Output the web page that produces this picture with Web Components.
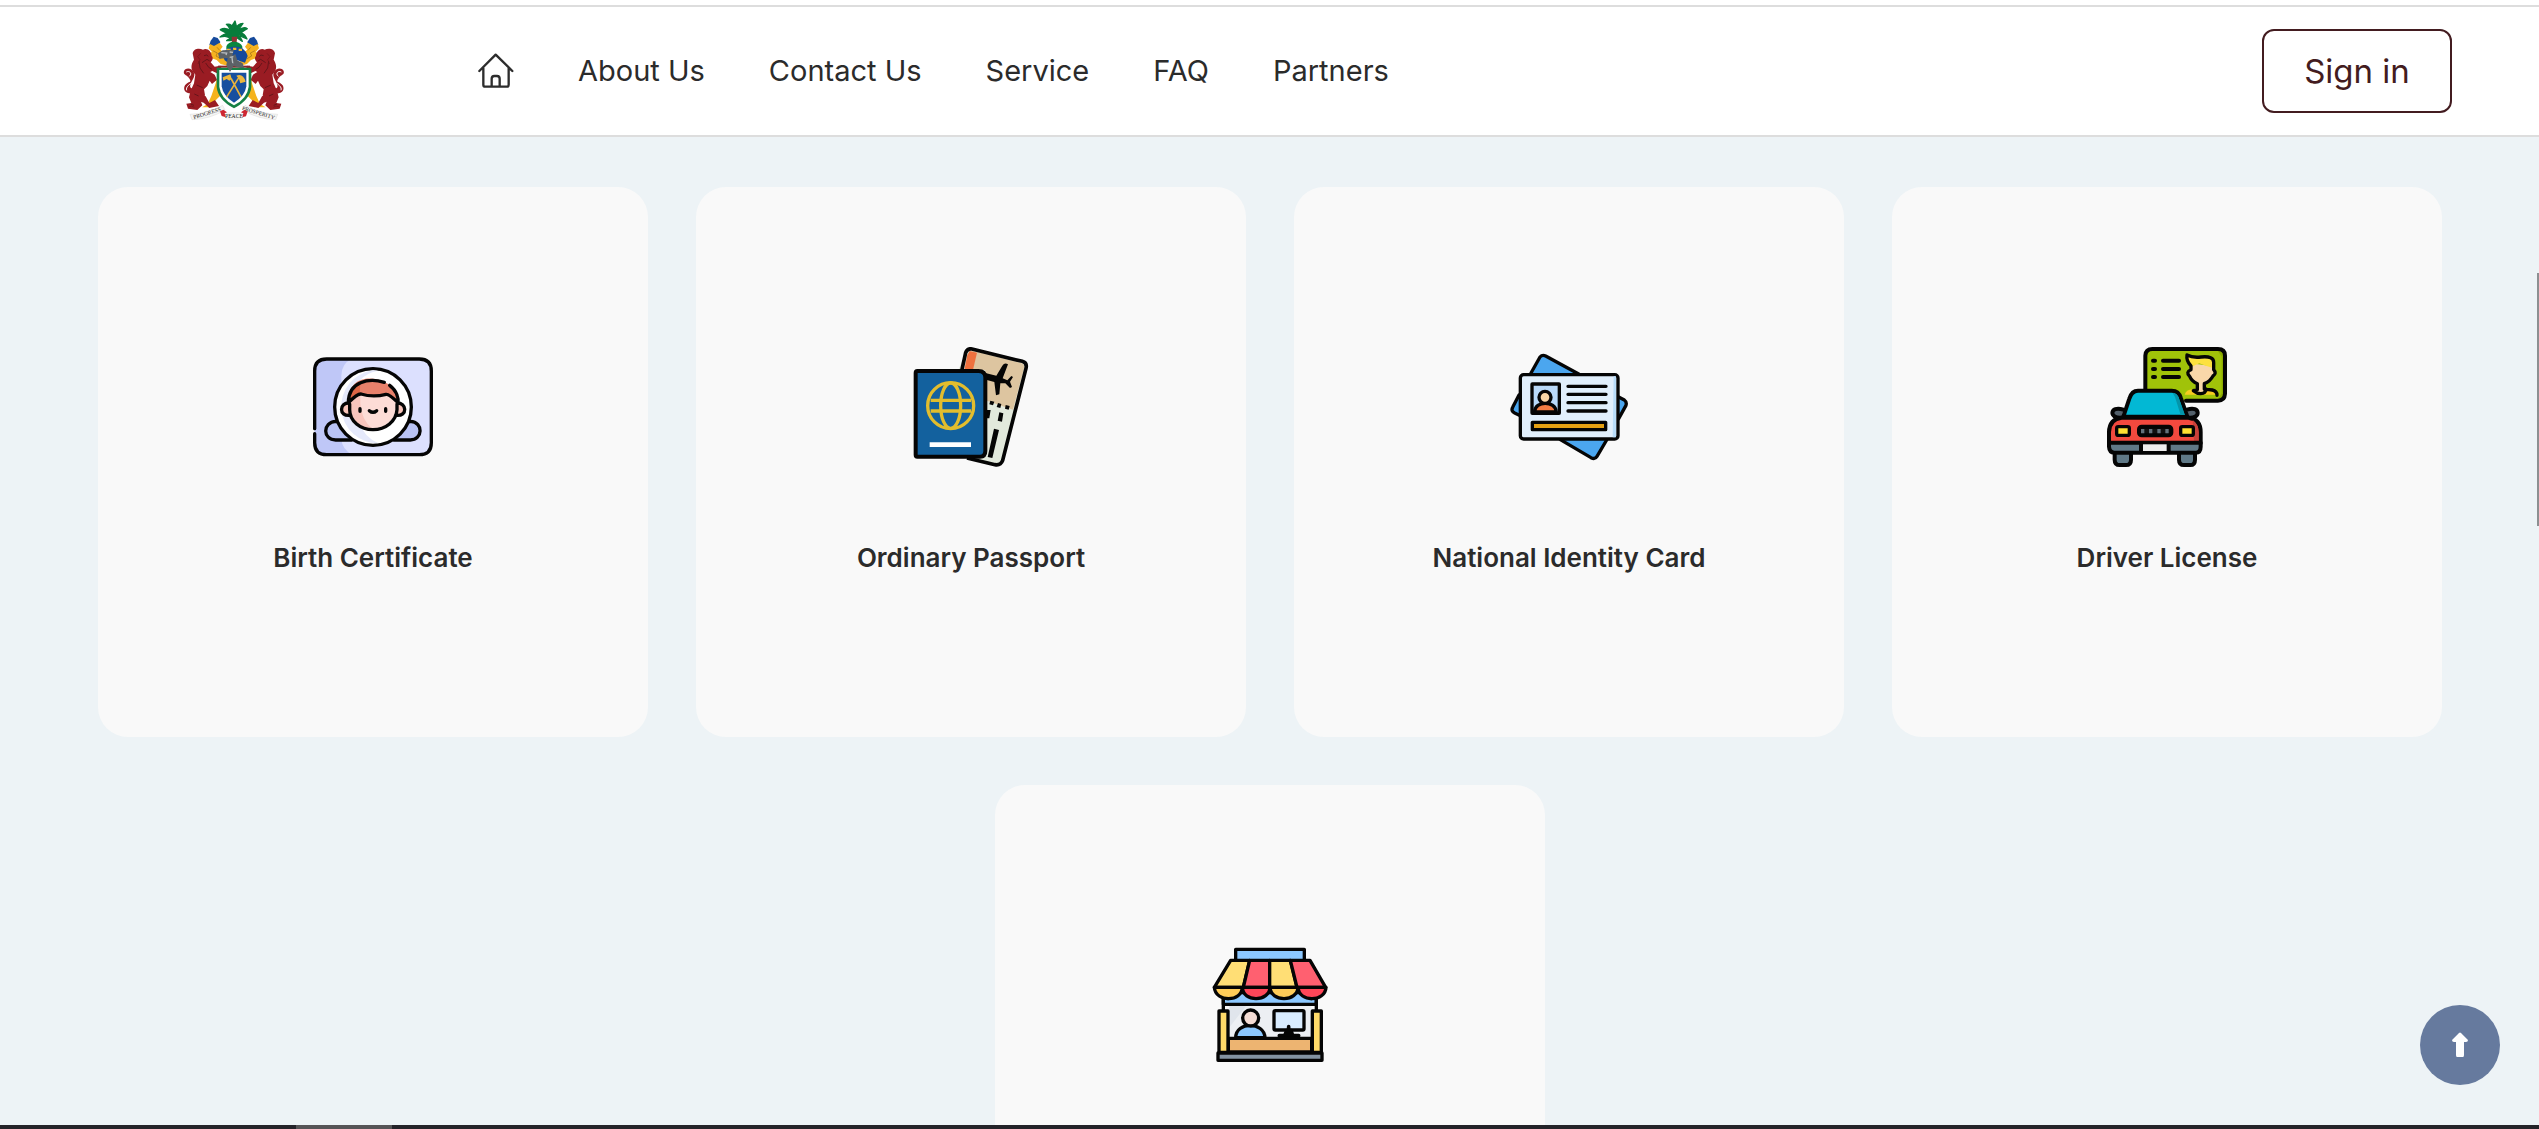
<!DOCTYPE html>
<html lang="en">
<head>
<meta charset="utf-8">
<title>Services</title>
<style>
html,body{margin:0;height:100%;overflow:hidden}
body{font-family:Inter,"Open Sans",sans-serif;color:#2b2b2b;background:#edf3f6}
</style>
</head>
<body>
<portal-page></portal-page>

<template id="art-crest">
<svg viewBox="36 27 312 312" aria-hidden="true">
<!-- lion, reused mirrored on the right -->
<defs>
<g id="side">
<path d="M124 205 L139 214 L124 258 L113 282 L96 292 L118 292 L134 274 L150 258 L143 212Z" fill="#f5b31c"/>
<path d="M122 92 L131 80 L143 84 L151 96 L146 108 L130 110 L118 105Z" fill="#164a9c"/>
<path d="M120 102 L132 108 L149 98 L158 110 L151 119 L163 128 L159 140 L174 150 L172 167 L152 162 L140 150 L122 144 L112 132 L126 126 L116 115Z" fill="#f6b220"/>
<path d="M128 122l14 7-4 9 14 8M141 112l8 9" stroke="#9a6b1a" stroke-width="2" fill="none"/>
<path d="M70 250 C48 254 37 240 45 226 C55 212 68 220 57 204 C48 192 39 196 42 183 C49 171 66 175 72 188 C77 201 64 211 61 224 C57 236 70 238 76 231Z" fill="#9a1c23"/>
<path d="M49 186 C58 181 68 190 58 199 M50 241 C47 231 57 225 62 220" stroke="#fff" stroke-width="3" fill="none"/>
<path d="M68 130 C71 114 89 114 99 119 C111 112 125 124 125 138 C132 144 126 153 122 157 L134 170 L151 167 L158 182 L141 190 L127 183 L121 186 L134 194 L141 209 L126 222 L119 212 L112 228 L102 238 L105 256 L92 272 L97 286 L82 300 L54 296 L49 281 L64 279 L57 262 L62 242 L72 220 L76 194 L68 184 C60 168 68 156 72 149Z" fill="#9a1c23"/>
<path d="M84 248 L107 259 L118 279 L135 270 L147 288 L118 294 L101 278 L83 272Z" fill="#9a1c23"/>
<path d="M102 137l8-2 5 4M96 158l15-10 8 5M87 153l3 21 11 16M107 159l9 13 10 6M80 225l18 8M73 252l13 6M62 282l10 4" stroke="#4c1015" stroke-width="2" fill="none"/>
<path d="M92 130l-9 10 7 9-6 13M55 291l10-3 8 4" stroke="#701319" stroke-width="2" fill="none"/>
</g>
</defs>
<use href="#side"/><use href="#side" transform="matrix(-1 0 0 1 383 0)"/>
<!-- crest: palm, wreath and helmet -->
<path d="M190 90 C172 76 161 79 150 81 C160 73 166 70 172 71 C160 63 155 63 151 59 C164 52 176 58 183 64 C178 54 177 49 169 43 C183 39 189 52 191 57 L187 46 L195 33 L199 48 L194 60 C202 43 211 40 219 40 C213 49 207 56 205 61 C218 51 228 53 232 56 C220 63 216 66 211 69 C222 70 226 76 231 87 C216 80 208 76 202 76 C212 81 215 87 217 94 C204 86 198 82 195 77 L193 89 C190 92 181 91 170 92 C178 87 185 82 190 78Z" fill="#087d3b" stroke="#087d3b" stroke-width="4" stroke-linejoin="round"/>
<path d="M185 80 L202 80 L199 102 L186 102Z" fill="#943235"/>
<path d="M169 110 C174 90 210 90 217 110 L217 117 L169 117Z" fill="#08863f"/>
<path d="M158 137 C169 100 223 101 233 138 L225 158 L202 151 L176 160 L164 151Z" fill="#164a9c"/>
<path d="M171 116h11v7h-11zM189 113h10v7h-10zM206 116h10v7h-10z" fill="#f6c02a"/>
<path d="M144 170h96" stroke="#8d2328" stroke-width="6"/>
<path d="M144 130 L158 121 L192 119 L187 137 L196 132 L202 151 L218 160 L223 177 L190 168 L178 183 L169 165 L173 144 L148 146Z" fill="#5c6267"/>
<path d="M154 128l16 1-2 6M179 126l10 1M186 143l3 23M179 142l11-2" stroke="#b8bdc1" stroke-width="4" fill="none"/>
<!-- shield -->
<path d="M140 173 H244 V231 Q240 270 192 295 Q144 270 140 231Z" fill="#168044"/>
<path d="M148 180 H236 V230 Q232 265 192 286 Q152 265 148 230Z" fill="#fff"/>
<path d="M155 188 H229 V229 Q225 258 192 278 Q159 258 155 229Z" fill="#174f9f"/>
<path d="M171 259 L205 205 M212 259 L184 207" stroke="#e7b23e" stroke-width="5" stroke-linecap="round"/>
<path d="M158 202 L181 193 L185 206 L178 212 L170 207 L160 212Z M199 197 Q219 188 227 215 L211 220 L207 207Z" fill="#edb83e"/>
<path d="M176 157 L198 162 L190 169 L180 186 L172 171Z" fill="#5c6267"/>
<!-- motto ribbon -->
<path d="M60 313 Q111 311 158 286 L165 300 Q119 328 66 329Z M323 313 Q272 311 225 286 L218 300 Q264 328 317 329Z" fill="#f5f5f3" stroke="#ccc" stroke-width="1"/>
<path d="M150 304 L160 299 L170 306 L168 322 L155 318Z M214 306 L224 299 L233 304 L228 319 L216 322Z" fill="#ce2732"/>
<path d="M164 309 Q191 303 220 309 L216 327 Q191 334 168 327Z" fill="#f5f5f3"/>
<g font-family="Liberation Serif,serif" font-size="17" fill="#222">
<text x="72" y="328" transform="rotate(-18 72 328)">PROGRESS</text>
<text x="165" y="325">PEACE</text>
<text x="215" y="299" transform="rotate(17 215 299)">PROSPERITY</text>
</g>
</svg>
</template>

<template id="art-birth">
<svg viewBox="69 51 360 360" aria-hidden="true"><g stroke="#050505" stroke-width="10" stroke-linecap="round" stroke-linejoin="round" fill="none">
<rect x="74" y="87" width="350" height="287" rx="36" fill="#dce0fe" stroke="none"/>
<path d="M110 87H186Q154 100 154 138V326Q156 358 187 374H110Q74 374 74 338V123Q74 87 110 87Z" fill="#bfc7f7" stroke="none"/>
<path d="M74 296V123Q74 87 110 87H388Q424 87 424 123V338Q424 374 388 374H110Q74 374 74 338V311"/>
<path d="M138 274C96 276 98 330 137 330H185L200 280ZM361 274C402 276 398 330 361 330H312L298 280Z" fill="#b9c3f5"/>
<circle cx="249" cy="231" r="115" fill="#fff"/>
<path d="M249 121A110 110 0 0 0 266 340Q222 322 211 282V150Q227 130 264 122Z" fill="#e5e9fb" stroke="none"/>
<path d="M178 219C148 217 145 260 180 256M320 219C350 217 355 260 318 256" fill="#f8c4ba"/>
<circle cx="249" cy="226" r="70" fill="#fddcd6" stroke="none"/>
<path d="M211 165C169 188 164 251 208 286Q222 299 249 299Q213 269 211 220Z" fill="#f9c5bd" stroke="none"/>
<path d="M175 218C173 136 247 137 283 156C311 168 329 204 325 218L295 194Q250 204 209 193Q190 202 175 218Z" fill="#e8816b" stroke="none"/>
<path d="M211 158Q171 176 176 218L209 193Z" fill="#de6646" stroke="none"/>
<path d="M179 222V239C179 273 211 299 249 299C287 299 319 273 321 239V222M175 218C175 154 237 143 283 157M299 166C321 183 326 205 324 219M175 218C195 198 205 191 213 192Q249 203 288 193Q297 191 324 218"/>
<path d="M210 236v8M287 236v8"/><path d="M238 242Q249 252 260 242"/>
</g></svg>
</template>

<template id="art-passport">
<svg viewBox="63 51 360 360" aria-hidden="true"><g stroke="#050505" stroke-width="11" stroke-linejoin="round" fill="none">
<path d="M246 57L397 94Q412 98 408 115L338 391Q332 407 315 404L231 384L205 120L227 68Q232 54 246 57Z" fill="#e2e9dc" stroke="none"/>
<path d="M247 62L393 99Q405 103 402 115L369 239L286 211V120H225L234 72Z" fill="#ddc5a0" stroke="none"/>
<path d="M239 63L261 68L249 119H223L232 75Z" fill="#ef713e" stroke="none"/>
<path d="M216 118L227 68Q232 54 246 57L397 94Q412 98 408 115L338 391Q332 407 315 404L231 384"/>
<path d="M286 129L319 137L337 107Q344 96 354 103L338 145L352 151L364 138L369 141L360 155L366 171L360 174L346 160L331 160L328 193L318 196L313 156L288 149Z" fill="#050505" stroke="none"/>
<path d="M301 212l12 3-4 11-11-3zM324 219l10 3-3 12-11-3zM347 225l12 3-3 11-11-3zM328 247l12 3-4 25-13-3zM290 240h12l-4 25h-8zM312 296l15 4-20 84-14-3z" fill="#050505" stroke="none"/>
<rect x="77" y="123" width="208" height="257" rx="6" fill="#13619e" stroke="none"/>
<path d="M82 123H265Q286 123 286 143V363Q286 380 270 380H82Q77 380 77 374V129Q77 123 82 123Z" stroke-width="12"/>
<g stroke="#e2bd2d" stroke-width="10"><circle cx="182" cy="227" r="69"/><ellipse cx="182" cy="227" rx="30" ry="68"/><path d="M122 211H243M122 243H243" /></g>
<path d="M119 344h124" stroke="#fff" stroke-width="14"/>
</g></svg>
</template>

<template id="art-identity">
<svg viewBox="57 51 360 360" aria-hidden="true"><g stroke="#050505" stroke-width="10" stroke-linecap="round" stroke-linejoin="round">
<path d="M123 129L150 81Q157 73 167 78L266 132M87 195L68 232Q62 243 74 249L91 257M386 201L403 210Q411 216 408 226L386 266M350 330L321 379Q315 389 303 383L211 329" fill="#4ba6ef"/>
<rect x="91" y="134" width="293" height="193" rx="10" fill="#e1effc"/><path d="M371 139h7v183h-10z" fill="#b9ddfa" stroke="none"/>
<rect x="126" y="162" width="82" height="88" rx="1" fill="#b9d9f9"/>
<path d="M134 246C134 211 197 211 199 246Z" fill="#f27c43"/><circle cx="165" cy="202" r="18" fill="#f9d5a6"/>
<path d="M234 169H348M234 193H348M234 218H348M234 243H348" fill="none"/>
<rect x="127" y="277" width="220" height="22" fill="#e6a113"/>
</g></svg>
</template>

<template id="art-driver">
<svg viewBox="81 51 360 360" aria-hidden="true"><g stroke="#050505" stroke-width="12" stroke-linecap="round" stroke-linejoin="round" fill="none">
<rect x="196" y="57" width="239" height="155" rx="20" fill="#a0c309" stroke="none"/>
<path d="M412 60Q433 62 434 80V190Q432 209 412 211L425 190V80Z" fill="#8cab00" stroke="none"/>
<path d="M196 179V77Q197 57 217 57H414Q435 57 435 77V191Q434 212 414 212H318"/>
<path d="M219 92h6M219 117h6M219 141h6M249 92h48M249 117h48M249 141h48"/>
<path d="M314 194Q318 178 342 178L362 193L386 178Q411 181 414 194Z" fill="#f7cc20" stroke="none"/>
<path d="M331 100L388 107L400 112V125Q409 132 398 140C391 155 379 161 372 164V182Q362 195 351 182V164C337 158 332 151 329 138Q315 130 329 120Z" fill="#f9d7a9" stroke="none"/>
<path d="M321 75Q334 83 363 80C395 77 409 92 399 114Q377 108 358 100L333 111Q319 93 321 75Z" fill="#fde13f" stroke="none"/>
<path d="M333 118V108Q318 92 321 75Q338 84 363 81Q402 77 401 98V119Q411 130 399 138C392 151 383 157 373 161V178Q388 178 397 180Q411 183 411 196M333 119Q316 126 329 139C335 153 343 157 352 161V179L340 182Q351 191 362 191Q379 190 378 177" stroke-width="10"/>
<path d="M130 239C88 225 86 268 126 263M321 239C363 225 363 268 325 263" fill="#53606b"/>
<path d="M104 373V389Q104 405 119 405H138Q153 405 153 389V371M297 373V389Q297 405 312 405H331Q345 405 345 389V371" fill="#607987"/>
<path d="M130 260L148 206Q155 182 174 182H275Q297 182 303 205L322 260Z" fill="#02b8d4"/>
<path d="M278 188Q293 188 298 208L315 255H302L285 201Z" fill="#0495aa" stroke="none"/>
<path d="M125 263H325Q362 267 362 306V340H87V306Q88 267 125 263Z" fill="#f2493e"/>
<path d="M338 270Q356 282 356 306V333H342Z" fill="#c9413a" stroke="none"/>
<path d="M87 338H362V350Q362 368 347 368H103Q88 368 87 350Z" fill="#607987"/>
<path d="M183 343H266V363H183Z" fill="#eee" stroke="none"/><path d="M183 341V366M266 341V366"/>
<rect x="110" y="290" width="38" height="26" rx="5" fill="#ffdf32" stroke-width="10"/><rect x="302" y="290" width="38" height="26" rx="5" fill="#ffdf32" stroke-width="10"/>
<rect x="177" y="290" width="97" height="26" rx="8" fill="#111"/>
<path d="M188 297v13M212 297v13M237 297v13M261 297v13" stroke="#63717b" stroke-width="10" stroke-linecap="butt"/>
</g></svg>
</template>

<template id="art-shop">
<svg viewBox="60 45 360 360" aria-hidden="true"><g stroke="#050505" stroke-width="10" stroke-linecap="round" stroke-linejoin="round" fill="none">
<path d="M117 224H364V325H117Z" fill="#eceff3" stroke="none"/><path d="M119 224H171L119 291Z" fill="#e0e5ec" stroke="none"/>
<path d="M100 188H379V223H100Z" fill="#8cc8ff"/>
<rect x="137" y="58" width="206" height="34" fill="#8cc8ff"/>
<path d="M122 91H179L160 172H73Z" fill="#ffde75"/><path d="M179 91H239V172H160Z" fill="#ff6070"/><path d="M239 91H301L321 172H239Z" fill="#ffde75"/><path d="M301 91H360L407 172H321Z" fill="#ff6070"/>
<path d="M73 172H157C156 216 77 219 73 172Z" fill="#ffcc58"/><path d="M157 172H240C239 216 158 218 157 172Z" fill="#ff4658"/><path d="M240 172H324C323 216 242 218 240 172Z" fill="#ffcc58"/><path d="M324 172H408C406 216 327 219 324 172Z" fill="#ff4658"/>
<path d="M100 205V240M379 205V240"/>
<path d="M137 323C137 274 223 274 225 323Z" fill="#8cc8ff"/><circle cx="182" cy="264" r="24" fill="#f4dcd4"/>
<rect x="252" y="242" width="90" height="58" rx="4" fill="#d9ecff"/>
<path d="M296 290V318M290 302L284 317M303 302L308 317M268 317H326" stroke-width="11"/>
<path d="M115 325H365V366H115Z" fill="#edb471"/>
<path d="M87 243H114V367H87ZM367 243H394V367H367Z" fill="#ffda69"/>
<path d="M84 369H396V391H84Z" fill="#8493a1"/>
</g></svg>
</template>

<script>
class PortalPage extends HTMLElement {
  constructor() {
    super();
    this.attachShadow({mode: 'open'}).innerHTML = `
<style>
:host{display:flex;flex-direction:column;height:100vh;overflow:hidden}
main{flex:1;min-height:0;overflow:hidden;padding:50px 97px 0 98px;display:flex;flex-wrap:wrap;justify-content:center;align-content:flex-start;gap:48px}
service-card{width:calc((100% - 144px) / 4)}
.bottom{flex:none;height:4px;background:#242329;display:flex}
.bottom i{width:96px;margin-left:296px;background:#555456}
.thumb{position:fixed;right:0;top:273px;width:2px;height:253px;background:#8c8f91}
</style>
<site-header></site-header>
<main>
<service-card art="birth">Birth Certificate</service-card>
<service-card art="passport">Ordinary Passport</service-card>
<service-card art="identity">National Identity Card</service-card>
<service-card art="driver">Driver License</service-card>
<service-card art="shop"></service-card>
</main>
<div class="bottom"><i></i></div>
<div class="thumb"></div>
<back-to-top></back-to-top>`;
  }
}
class SiteHeader extends HTMLElement {
  constructor() {
    super();
    this.attachShadow({mode: 'open'}).innerHTML = `
<style>
:host{display:block;flex:none;background:#fff;padding-top:5px}
header{display:flex;align-items:center;height:128px;border:solid #ddd;border-width:2px 0;padding:0 87px 0 182px}
a{color:inherit;text-decoration:none}
.logo{width:104px;height:104px;margin-right:192px}
svg{display:block;width:100%;height:100%}
nav{display:flex;align-items:center;gap:64px;font-size:29px;line-height:40px;white-space:nowrap}
.home{width:36px;height:36px}
button{margin-left:auto;width:190px;height:84px;border:2px solid #431c20;border-radius:12px;background:#fff;color:#431c20;font:inherit;font-size:33px;line-height:40px;padding:0}
</style>
<header>
<a class="logo" href="#" aria-label="Portal"></a>
<nav>
<a class="home" href="#" aria-label="Home"><svg viewBox="954 159 108 108" fill="none" stroke="#2d2d2d" stroke-width="7" stroke-linecap="round" stroke-linejoin="round"><path d="M958 213L1007 164L1057 213M970 205V254Q970 260 976 260H1040Q1046 260 1046 254V205M995 259V236Q995 228 1003 228H1011Q1019 228 1019 236V259"/></svg></a>
<a href="#">About Us</a><a href="#">Contact Us</a><a href="#">Service</a><a href="#">FAQ</a><a href="#">Partners</a>
</nav>
<button type="button">Sign in</button>
</header>`;
    this.shadowRoot.querySelector('.logo').append(document.getElementById('art-crest').content.cloneNode(true));
  }
}
class ServiceCard extends HTMLElement {
  constructor() {
    super();
    this.attachShadow({mode: 'open'}).innerHTML = `
<style>
:host{display:block;aspect-ratio:1;background:#f9f9f9;border-radius:30px;overflow:hidden}
a{display:flex;flex-direction:column;align-items:center;justify-content:center;height:100%;gap:72px;color:inherit;text-decoration:none;font-size:26px;line-height:38px;font-weight:600}
.art{width:120px;height:120px}
svg{display:block;width:100%;height:100%}
.title{min-height:38px}
</style>
<a href="#"><div class="art"></div><div class="title"><slot></slot></div></a>`;
  }
  connectedCallback() {
    this.shadowRoot.querySelector('.art').replaceChildren(document.getElementById('art-' + this.getAttribute('art')).content.cloneNode(true));
  }
}
class BackToTop extends HTMLElement {
  constructor() {
    super();
    this.attachShadow({mode: 'open'}).innerHTML = `
<style>
:host{position:fixed;right:39px;bottom:44px;display:block}
button{display:flex;align-items:center;justify-content:center;width:80px;height:80px;border:0;border-radius:50%;padding:0;background:#667a9e}
svg{width:16px;height:26px}
</style>
<button type="button" aria-label="Back to top"><svg viewBox="0 0 16 26"><path d="M7 1Q8 0 9 1L16 8Q16 10 14 10H12V23Q12 25 11 25H5Q4 25 4 23V10H2Q0 10 0 8Z" fill="#fff"/></svg></button>`;
  }
}
customElements.define('site-header', SiteHeader);
customElements.define('service-card', ServiceCard);
customElements.define('back-to-top', BackToTop);
customElements.define('portal-page', PortalPage);
</script>
</body>
</html>
